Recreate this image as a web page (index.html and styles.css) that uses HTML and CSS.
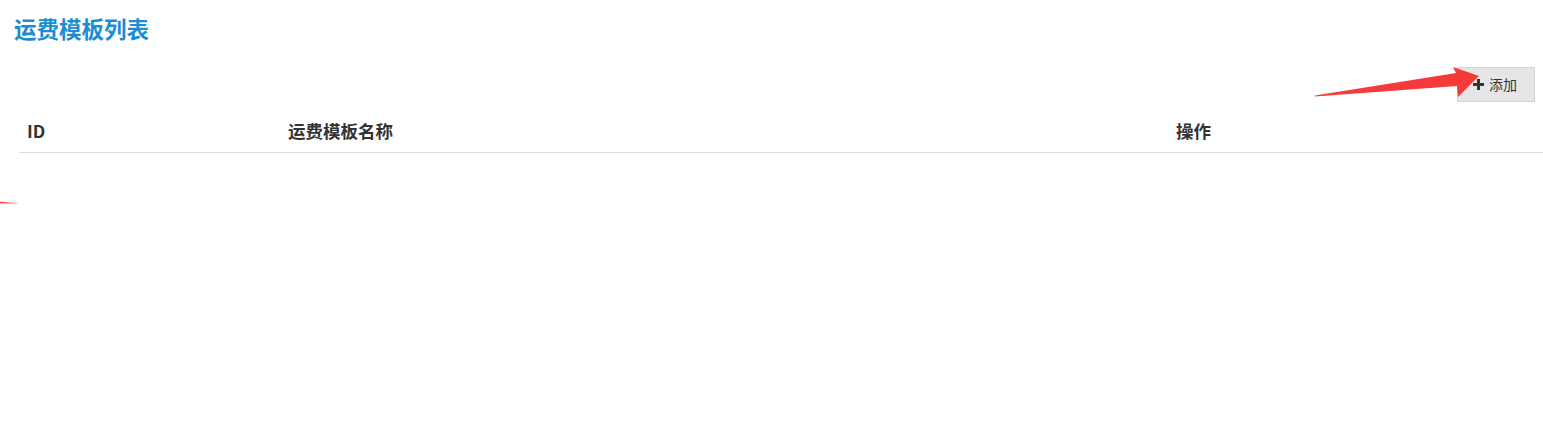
FILE: index.html
```html
<!DOCTYPE html>
<html lang="zh">
<head>
<meta charset="utf-8">
<link rel="stylesheet" href="styles.css">
</head>
<body>
<div class="page">
  <h1 class="title">运费模板列表</h1>
  <div class="toolbar">
    <button class="btn-add"><span class="plus"></span>添加</button>
  </div>
  <div class="table">
    <div class="th">ID</div>
    <div class="th">运费模板名称</div>
    <div class="th">操作</div>
  </div>
</div>
<svg class="annot" width="1543" height="435" viewBox="0 0 1543 435">
  <defs>
    <linearGradient id="fade" x1="0" y1="0" x2="1" y2="0">
      <stop offset="0" stop-color="#f33" stop-opacity="1"/>
      <stop offset="1" stop-color="#f33" stop-opacity="0.2"/>
    </linearGradient>
  </defs>
  <polygon points="1315,95.5 1456,73 1453,67 1479,76 1458,97 1457,86 1315,96.5" fill="#f53a3a"/>
  <path d="M0 202.5 L18 203.5" stroke="url(#fade)" stroke-width="1.6" fill="none"/>
</svg>
</body>
</html>
```

FILE: styles.css
```css
html, body {
  margin: 0;
  padding: 0;
  background: #fff;
}
body {
  font-family: "Noto Sans CJK SC", "Open Sans", sans-serif;
  color: #333;
  position: relative;
  width: 1543px;
  height: 435px;
  overflow: hidden;
}
.page {
  padding: 0 0 0 14px;
}
.title {
  margin: 0;
  padding-top: 13px;
  font-size: 22.5px;
  line-height: 30px;
  font-weight: bold;
  color: #1a8dd4;
}
.toolbar {
  display: flex;
  justify-content: flex-end;
  padding-right: 8px;
  margin-top: 24px;
}
.btn-add {
  display: flex;
  align-items: center;
  height: 35px;
  width: 78px;
  box-sizing: border-box;
  padding: 0 0 1px 15px;
  border: 1px solid #d2d2d2;
  background: #e6e6e6;
  font-family: "Noto Sans CJK SC", sans-serif;
  font-size: 14px;
  color: #333;
  cursor: pointer;
}
.plus {
  position: relative;
  width: 11px;
  height: 11px;
  margin-right: 5px;
}
.plus::before, .plus::after {
  content: "";
  position: absolute;
  background: #333;
}
.plus::before {
  left: 4px;
  top: 0;
  width: 3px;
  height: 11px;
}
.plus::after {
  left: 0;
  top: 4px;
  width: 11px;
  height: 3px;
}
.table {
  margin-left: 5px;
  display: grid;
  grid-template-columns: 261px 888px 1fr;
  border-bottom: 1px solid #dddddd;
  margin-top: 8px;
}
.th {
  padding: 0 8px;
  height: 42px;
  line-height: 42px;
  font-size: 17.5px;
  font-weight: bold;
  color: #333;
}
.annot {
  position: absolute;
  left: 0;
  top: 0;
  pointer-events: none;
}
```
